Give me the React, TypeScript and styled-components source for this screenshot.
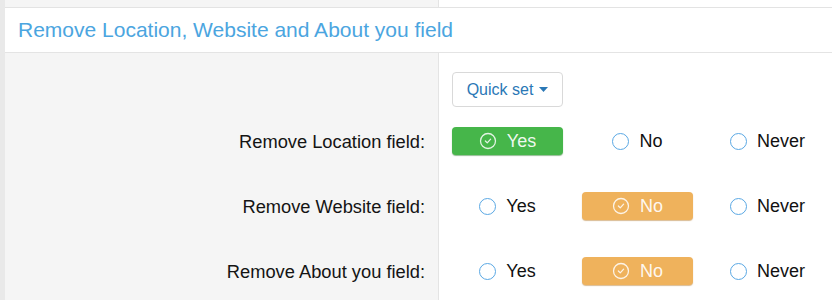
import React from "react";
import styled, { createGlobalStyle } from "styled-components";

const GlobalStyle = createGlobalStyle`
  html, body {
    margin: 0;
    padding: 0;
    background: #ffffff;
    font-family: "Liberation Sans", Arial, Helvetica, sans-serif;
  }
`;

const LABEL_COL = "434px";

const Page = styled.div`
  border-left: 5px solid #e9e9e9;
  min-height: 300px;
  box-sizing: border-box;
`;

const TopStrip = styled.div`
  display: grid;
  grid-template-columns: ${LABEL_COL} 1fr;
  height: 7px;
  border-bottom: 1px solid #e3e3e3;
`;

const StripCell = styled.div<{ $shaded?: boolean }>`
  background: ${(p) => (p.$shaded ? "#f5f5f5" : "#ffffff")};
  border-right: ${(p) => (p.$shaded ? "1px solid #e4e4e4" : "none")};
`;

const Header = styled.h2`
  margin: 0;
  height: 44px;
  display: flex;
  align-items: center;
  padding-left: 13px;
  font-size: 21px;
  font-weight: normal;
  color: #4ba5e0;
  border-bottom: 1px solid #e4e4e4;
`;

const Row = styled.div`
  display: grid;
  grid-template-columns: ${LABEL_COL} 1fr;
`;

const Label = styled.div`
  background: #f5f5f5;
  border-right: 1px solid #e4e4e4;
  display: flex;
  align-items: center;
  justify-content: flex-end;
  padding-right: 13px;
  font-size: 18.3px;
  color: #141414;
`;

const Controls = styled.div<{ $top: number; $bottom: number }>`
  display: grid;
  grid-template-columns: repeat(3, 111px);
  column-gap: 19px;
  padding: ${(p) => p.$top}px 0 ${(p) => p.$bottom}px 13px;
`;

const QuickSet = styled.button`
  height: 35px;
  width: 111px;
  display: flex;
  align-items: center;
  justify-content: center;
  gap: 6px;
  background: #ffffff;
  border: 1px solid #d9d9d9;
  border-radius: 4px;
  font-family: inherit;
  font-size: 16px;
  color: #2a78b6;
  padding: 0;
`;

const Option = styled.div<{ $tone?: "green" | "orange" }>`
  height: 28px;
  box-sizing: border-box;
  display: flex;
  align-items: center;
  justify-content: center;
  gap: 10px;
  font-size: 18px;
  border-radius: 4px;
  color: ${(p) => (p.$tone ? "rgba(255,255,255,0.92)" : "#111111")};
  background: ${(p) =>
    p.$tone === "green" ? "#46b64a" : p.$tone === "orange" ? "#efb25c" : "transparent"};
  box-shadow: ${(p) =>
    p.$tone === "green"
      ? "0 1px 1px rgba(40, 120, 40, 0.5)"
      : p.$tone === "orange"
      ? "0 1px 1px rgba(180, 120, 40, 0.5)"
      : "none"};
`;

const Radio = styled.span`
  width: 17px;
  height: 17px;
  box-sizing: border-box;
  border-radius: 50%;
  border: 1.6px solid #5aa8e4;
  background: #ffffff;
  flex: none;
`;

const Caret = () => (
  <svg width="9" height="5" viewBox="0 0 9 5">
    <path d="M0 0h9L4.5 5z" fill="currentColor" />
  </svg>
);

const CheckCircle = () => (
  <svg
    width="18"
    height="18"
    viewBox="0 0 24 24"
    fill="none"
    stroke="rgba(255,255,255,0.85)"
    strokeWidth="1.7"
    strokeLinecap="round"
    strokeLinejoin="round"
  >
    <circle cx="12" cy="12" r="10" />
    <path d="m8.5 12 2.5 2.5 4.5-5" />
  </svg>
);

type Choice = "Yes" | "No" | "Never";

const fields: { label: string; value: Choice }[] = [
  { label: "Remove Location field:", value: "Yes" },
  { label: "Remove Website field:", value: "No" },
  { label: "Remove About you field:", value: "No" },
];

const choices: Choice[] = ["Yes", "No", "Never"];

export default function App() {
  return (
    <Page>
      <GlobalStyle />
      <TopStrip>
        <StripCell $shaded />
        <StripCell />
      </TopStrip>
      <Header>Remove Location, Website and About you field</Header>

      <Row>
        <Label />
        <Controls $top={19} $bottom={2}>
          <QuickSet>
            Quick set <Caret />
          </QuickSet>
        </Controls>
      </Row>

      {fields.map((f) => (
        <Row key={f.label}>
          <Label>{f.label}</Label>
          <Controls $top={18} $bottom={19}>
            {choices.map((c) => {
              const selected = c === f.value;
              const tone = selected ? (c === "Yes" ? "green" : "orange") : undefined;
              return (
                <Option key={c} $tone={tone}>
                  {selected ? <CheckCircle /> : <Radio />}
                  {c}
                </Option>
              );
            })}
          </Controls>
        </Row>
      ))}
    </Page>
  );
}
